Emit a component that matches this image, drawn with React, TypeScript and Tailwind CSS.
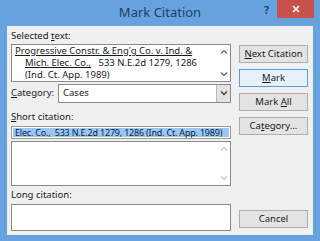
import React from 'react';

const font = { fontFamily: '"Noto Sans", "Open Sans", sans-serif' };

function Btn({ children, focused }: { children: React.ReactNode; focused?: boolean }) {
  return (
    <div
      className={`h-[18px] w-full flex items-center justify-center border text-[9.5px] leading-none text-[#1a1a1a] ${
        focused ? 'bg-[#e5f1fb] border-[#5aa0e0]' : 'bg-[#e3e3e3] border-[#adadad]'
      }`}
    >
      {children}
    </div>
  );
}

function ScrollArrows({ dim }: { dim?: boolean }) {
  const c = dim ? '#c4c4c4' : '#606060';
  return (
    <div className="w-[13px] h-full flex flex-col justify-between items-center py-[4px]">
      <svg width="8" height="5" viewBox="0 0 8 5">
        <path d="M1 4.5 L4 1.5 L7 4.5" fill="none" stroke={c} strokeWidth="1.2" />
      </svg>
      <svg width="8" height="5" viewBox="0 0 8 5">
        <path d="M1 0.5 L4 3.5 L7 0.5" fill="none" stroke={c} strokeWidth="1.2" />
      </svg>
    </div>
  );
}

export default function App() {
  return (
    <div className="w-[320px] h-[241px] bg-[#66a3de] flex flex-col px-[7px] pb-[6px] relative" style={font}>
      {/* title bar */}
      <div className="h-[26px] flex items-center justify-center text-[13px] text-[#22405f]">Mark Citation</div>
      <div className="absolute left-[264px] top-[2px] text-[11px] font-semibold text-[#1f3553]">?</div>
      <div className="absolute left-[277px] top-0 w-[37px] h-[18px] bg-[#c9514c] flex items-center justify-center">
        <svg width="8" height="8" viewBox="0 0 8 8">
          <path d="M1 1 L7 7 M7 1 L1 7" stroke="#fff" strokeWidth="1.6" />
        </svg>
      </div>

      {/* body */}
      <div className="flex-1 bg-[#f0f0f0] flex px-[4px] text-[9.5px] text-[#1a1a1a]">
        <div className="w-[220px] flex flex-col">
          <div className="h-[14px] mt-[3px] flex items-center">
            Selected&nbsp;<span className="underline">t</span>ext:
          </div>
          <div className="mt-[1px] h-[38px] bg-white border border-[#8a8a8a] flex">
            <div className="flex-1 pl-[3px] leading-[12px] text-[#1a1a1a]">
              <div className="whitespace-nowrap underline">Progressive Constr. &amp; Eng'g Co. v. Ind. &amp;</div>
              <div className="whitespace-nowrap pl-[10px]">
                <span className="underline">Mich. Elec. Co.,</span>&nbsp;&nbsp; 533 N.E.2d 1279, 1286
              </div>
              <div className="whitespace-nowrap pl-[10px]">(Ind. Ct. App. 1989)</div>
            </div>
            <ScrollArrows />
          </div>
          <div className="mt-[2px] flex items-center">
            <div className="w-[47px]">
              <span className="underline">C</span>ategory:
            </div>
            <div className="flex-1 h-[19px] bg-white border border-[#8a8a8a] flex items-center">
              <div className="flex-1 pl-[4px]">Cases</div>
              <div className="w-[14px] h-full bg-[#e3e3e3] border-l border-[#b8b8b8] flex items-center justify-center">
                <svg width="8" height="5" viewBox="0 0 8 5">
                  <path d="M1 0.5 L4 3.5 L7 0.5" fill="none" stroke="#404040" strokeWidth="1.3" />
                </svg>
              </div>
            </div>
          </div>
          <div className="h-[14px] mt-[7px] flex items-center">
            <span className="underline">S</span>hort citation:
          </div>
          <div className="mt-[2px] h-[13px] bg-white border border-[#9a9a9a] px-px py-px">
            <div className="h-full bg-[#99c7f2] flex items-center pl-[2px] whitespace-nowrap text-[9px] tracking-[-0.2px] text-[#0d1f3a]">
              Elec. Co.,&nbsp;&nbsp;533 N.E.2d 1279, 1286 (Ind. Ct. App. 1989)
            </div>
          </div>
          <div className="mt-[2px] h-[45px] bg-white border border-[#8a8a8a] flex justify-end">
            <ScrollArrows dim />
          </div>
          <div className="h-[14px] mt-[2px] flex items-center">Long citation:</div>
          <div className="mt-[2px] h-[27px] bg-white border border-[#8a8a8a]" />
        </div>

        <div className="w-[69px] ml-[8px] flex flex-col pt-[19px] pb-[7px] gap-[6px]">
          <Btn>
            <span className="underline">N</span>ext Citation
          </Btn>
          <Btn focused>
            <span className="underline">M</span>ark
          </Btn>
          <Btn>
            Mark&nbsp;<span className="underline">A</span>ll
          </Btn>
          <Btn>
            Ca<span className="underline">t</span>egory...
          </Btn>
          <div className="mt-auto">
            <Btn>Cancel</Btn>
          </div>
        </div>
      </div>
    </div>
  );
}
